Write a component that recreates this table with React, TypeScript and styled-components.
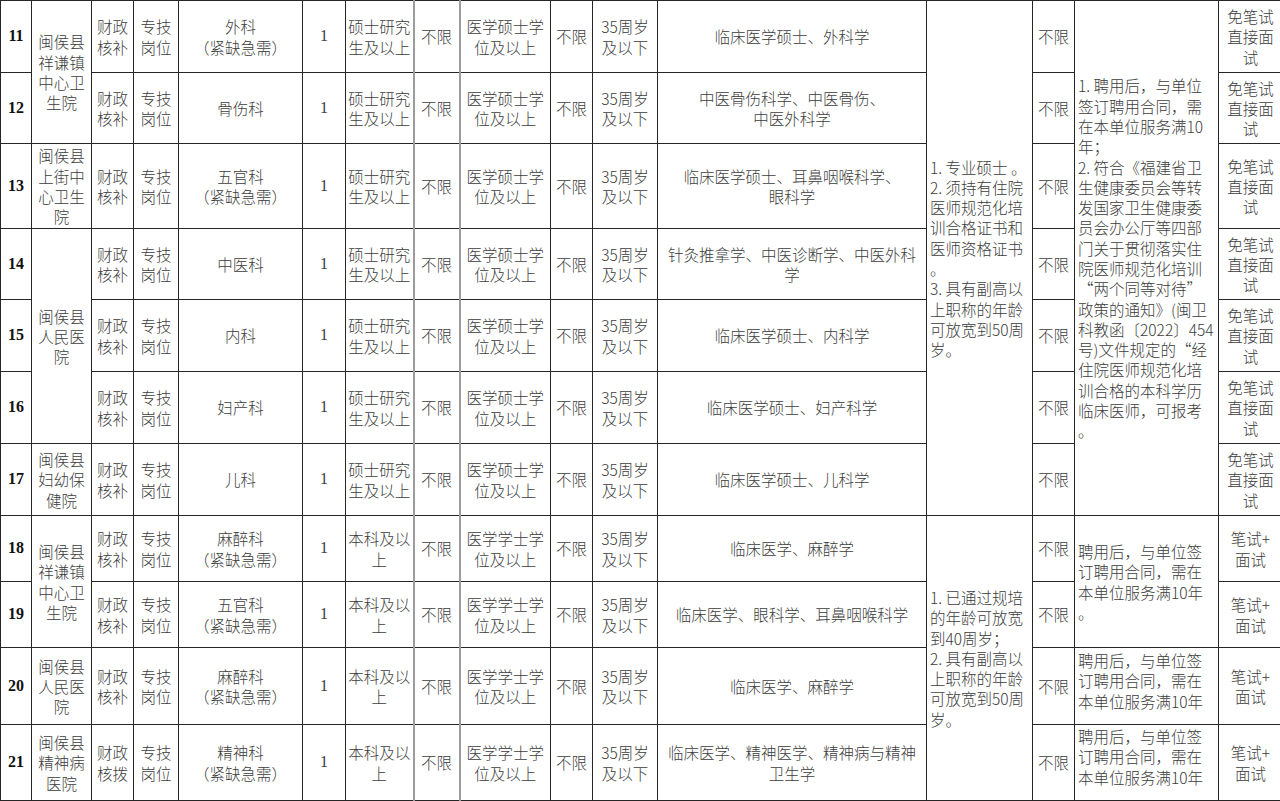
import { Fragment } from "react";
import styled, { createGlobalStyle } from "styled-components";

const GlobalStyle = createGlobalStyle`
    html, body {
        margin: 0;
        padding: 0;
        background: #fff;
        overflow: hidden;
    }
`;

const Sheet = styled.table`
    border-collapse: collapse;
    table-layout: fixed;
    width: 1282px;
    font-family: "Noto Sans CJK SC", "Liberation Serif", sans-serif;
    font-size: 15.5px;
    font-weight: 300;
    line-height: 20.3px;
    color: #3c3c3c;
`;

const Row = styled.tr<{ $h: number }>`
    height: ${({ $h }) => $h}px;
`;

const Cell = styled.td<{ $align?: "left" | "center"; $soft?: boolean; $top?: boolean }>`
    border: 1px solid #262626;
    padding: 0 2px;
    text-align: ${({ $align }) => $align ?? "center"};
    vertical-align: ${({ $top }) => ($top ? "top" : "middle")};
    white-space: nowrap;
    overflow: hidden;

    ${({ $soft }) =>
        $soft &&
        `
        border-left: 2px solid #9c9c9c;
        border-right: 2px solid #9c9c9c;
    `}
`;

const SeqCell = styled(Cell)`
    font-family: "Liberation Serif", serif;
    font-weight: 700;
    font-size: 16px;
    color: #111;
`;

const CountCell = styled(Cell)`
    font-family: "Liberation Serif", serif;
    font-size: 16px;
    font-weight: 400;
`;

const NoteCell = styled(Cell)`
    padding: 0 1px 0 3px;
`;

// remark text that is longer than its row and gets cut at the bottom
const Clip = styled.div<{ $h: number; $pt: number }>`
    height: ${({ $h }) => $h}px;
    padding-top: ${({ $pt }) => $pt}px;
    box-sizing: border-box;
    overflow: hidden;
`;

const Line = styled.div``;

const Lines = ({ items }: { items: string[] }) => (
    <>
        {items.map((t, i) => (
            <Line key={i}>{t}</Line>
        ))}
    </>
);

type Span = { lines: string[]; span: number };

type RowData = {
    no: number;
    h: number;
    unit?: Span;
    funding: string[];
    position: string[];
    edu: string[];
    degree: string[];
    major: string[];
    other?: Span;
    remark?: Span;
    clipped?: { lines: string[]; pt: number };
    exam: string[];
};

const master = ["硕士研究", "生及以上"];
const masterDeg = ["医学硕士学", "位及以上"];
const bachelor = ["本科及以", "上"];
const bachelorDeg = ["医学学士学", "位及以上"];
const noExam = ["免笔试", "直接面", "试"];
const exam = ["笔试+", "面试"];
const fin = ["财政", "核补"];

const contract = ["聘用后，与单位签", "订聘用合同，需在", "本单位服务满10年", "。"];

const rows: RowData[] = [
    {
        no: 11, h: 72,
        unit: { lines: ["闽侯县", "祥谦镇", "中心卫", "生院"], span: 2 },
        funding: fin, position: ["外科", "（紧缺急需）"], edu: master, degree: masterDeg,
        major: ["临床医学硕士、外科学"],
        other: {
            span: 7,
            lines: [
                "1. 专业硕士  。", "2. 须持有住院", "医师规范化培", "训合格证书和", "医师资格证书",
                "。", "3. 具有副高以", "上职称的年龄", "可放宽到50周", "岁。",
            ],
        },
        remark: {
            span: 7,
            lines: [
                "1. 聘用后，与单位", "签订聘用合同，需", "在本单位服务满10", "年；",
                "2. 符合《福建省卫", "生健康委员会等转", "发国家卫生健康委", "员会办公厅等四部",
                "门关于贯彻落实住", "院医师规范化培训", " “两个同等对待”", "政策的通知》(闽卫",
                "科教函〔2022〕454", "号)文件规定的“经", "住院医师规范化培", "训合格的本科学历",
                "临床医师，可报考", "。",
            ],
        },
        exam: noExam,
    },
    {
        no: 12, h: 71, funding: fin, position: ["骨伤科"], edu: master, degree: masterDeg,
        major: ["中医骨伤科学、中医骨伤、", "中医外科学"], exam: noExam,
    },
    {
        no: 13, h: 85,
        unit: { lines: ["闽侯县", "上街中", "心卫生", "院"], span: 1 },
        funding: fin, position: ["五官科", "（紧缺急需）"], edu: master, degree: masterDeg,
        major: ["临床医学硕士、耳鼻咽喉科学、", "眼科学"], exam: noExam,
    },
    {
        no: 14, h: 71,
        unit: { lines: ["闽侯县", "人民医", "院"], span: 3 },
        funding: fin, position: ["中医科"], edu: master, degree: masterDeg,
        major: ["针灸推拿学、中医诊断学、中医外科", "学"], exam: noExam,
    },
    {
        no: 15, h: 72, funding: fin, position: ["内科"], edu: master, degree: masterDeg,
        major: ["临床医学硕士、内科学"], exam: noExam,
    },
    {
        no: 16, h: 72, funding: fin, position: ["妇产科"], edu: master, degree: masterDeg,
        major: ["临床医学硕士、妇产科学"], exam: noExam,
    },
    {
        no: 17, h: 72,
        unit: { lines: ["闽侯县", "妇幼保", "健院"], span: 1 },
        funding: fin, position: ["儿科"], edu: master, degree: masterDeg,
        major: ["临床医学硕士、儿科学"], exam: noExam,
    },
    {
        no: 18, h: 66,
        unit: { lines: ["闽侯县", "祥谦镇", "中心卫", "生院"], span: 2 },
        funding: fin, position: ["麻醉科", "（紧缺急需）"], edu: bachelor, degree: bachelorDeg,
        major: ["临床医学、麻醉学"],
        other: {
            span: 4,
            lines: [
                "1. 已通过规培", "的年龄可放宽", "到40周岁；", "2. 具有副高以",
                "上职称的年龄", "可放宽到50周", "岁。",
            ],
        },
        remark: { span: 2, lines: contract },
        exam,
    },
    {
        no: 19, h: 66, funding: fin, position: ["五官科", "（紧缺急需）"], edu: bachelor,
        degree: bachelorDeg, major: ["临床医学、眼科学、耳鼻咽喉科学"], exam,
    },
    {
        no: 20, h: 77,
        unit: { lines: ["闽侯县", "人民医", "院"], span: 1 },
        funding: fin, position: ["麻醉科", "（紧缺急需）"], edu: bachelor, degree: bachelorDeg,
        major: ["临床医学、麻醉学"], clipped: { lines: contract, pt: 2 }, exam,
    },
    {
        no: 21, h: 76,
        unit: { lines: ["闽侯县", "精神病", "医院"], span: 1 },
        funding: ["财政", "核拨"], position: ["精神科", "（紧缺急需）"], edu: bachelor,
        degree: bachelorDeg, major: ["临床医学、精神医学、精神病与精神", "卫生学"],
        clipped: { lines: contract, pt: 1 }, exam,
    },
];

const widths = [31, 60, 42, 45, 124, 43, 68, 46, 91, 42, 65, 269, 106, 42, 144, 64];

const App = () => {
    return (
        <Fragment>
            <GlobalStyle />
            <Sheet>
                <colgroup>
                    {widths.map((w, i) => (
                        <col key={i} style={{ width: w }} />
                    ))}
                </colgroup>
                <tbody>
                    {rows.map((r) => (
                        <Row key={r.no} $h={r.h}>
                            <SeqCell>{r.no}</SeqCell>
                            {r.unit && (
                                <Cell rowSpan={r.unit.span}>
                                    <Lines items={r.unit.lines} />
                                </Cell>
                            )}
                            <Cell><Lines items={r.funding} /></Cell>
                            <Cell><Lines items={["专技", "岗位"]} /></Cell>
                            <Cell><Lines items={r.position} /></Cell>
                            <CountCell>1</CountCell>
                            <Cell><Lines items={r.edu} /></Cell>
                            <Cell $soft>不限</Cell>
                            <Cell><Lines items={r.degree} /></Cell>
                            <Cell>不限</Cell>
                            <Cell><Lines items={["35周岁", "及以下"]} /></Cell>
                            <Cell><Lines items={r.major} /></Cell>
                            {r.other && (
                                <NoteCell rowSpan={r.other.span} $align="left">
                                    <Lines items={r.other.lines} />
                                </NoteCell>
                            )}
                            <Cell>不限</Cell>
                            {r.remark && (
                                <NoteCell rowSpan={r.remark.span} $align="left">
                                    <Lines items={r.remark.lines} />
                                </NoteCell>
                            )}
                            {r.clipped && (
                                <NoteCell $align="left" $top>
                                    <Clip $h={r.h - 1} $pt={r.clipped.pt}>
                                        <Lines items={r.clipped.lines} />
                                    </Clip>
                                </NoteCell>
                            )}
                            <Cell><Lines items={r.exam} /></Cell>
                        </Row>
                    ))}
                </tbody>
            </Sheet>
        </Fragment>
    );
};

export default App;
